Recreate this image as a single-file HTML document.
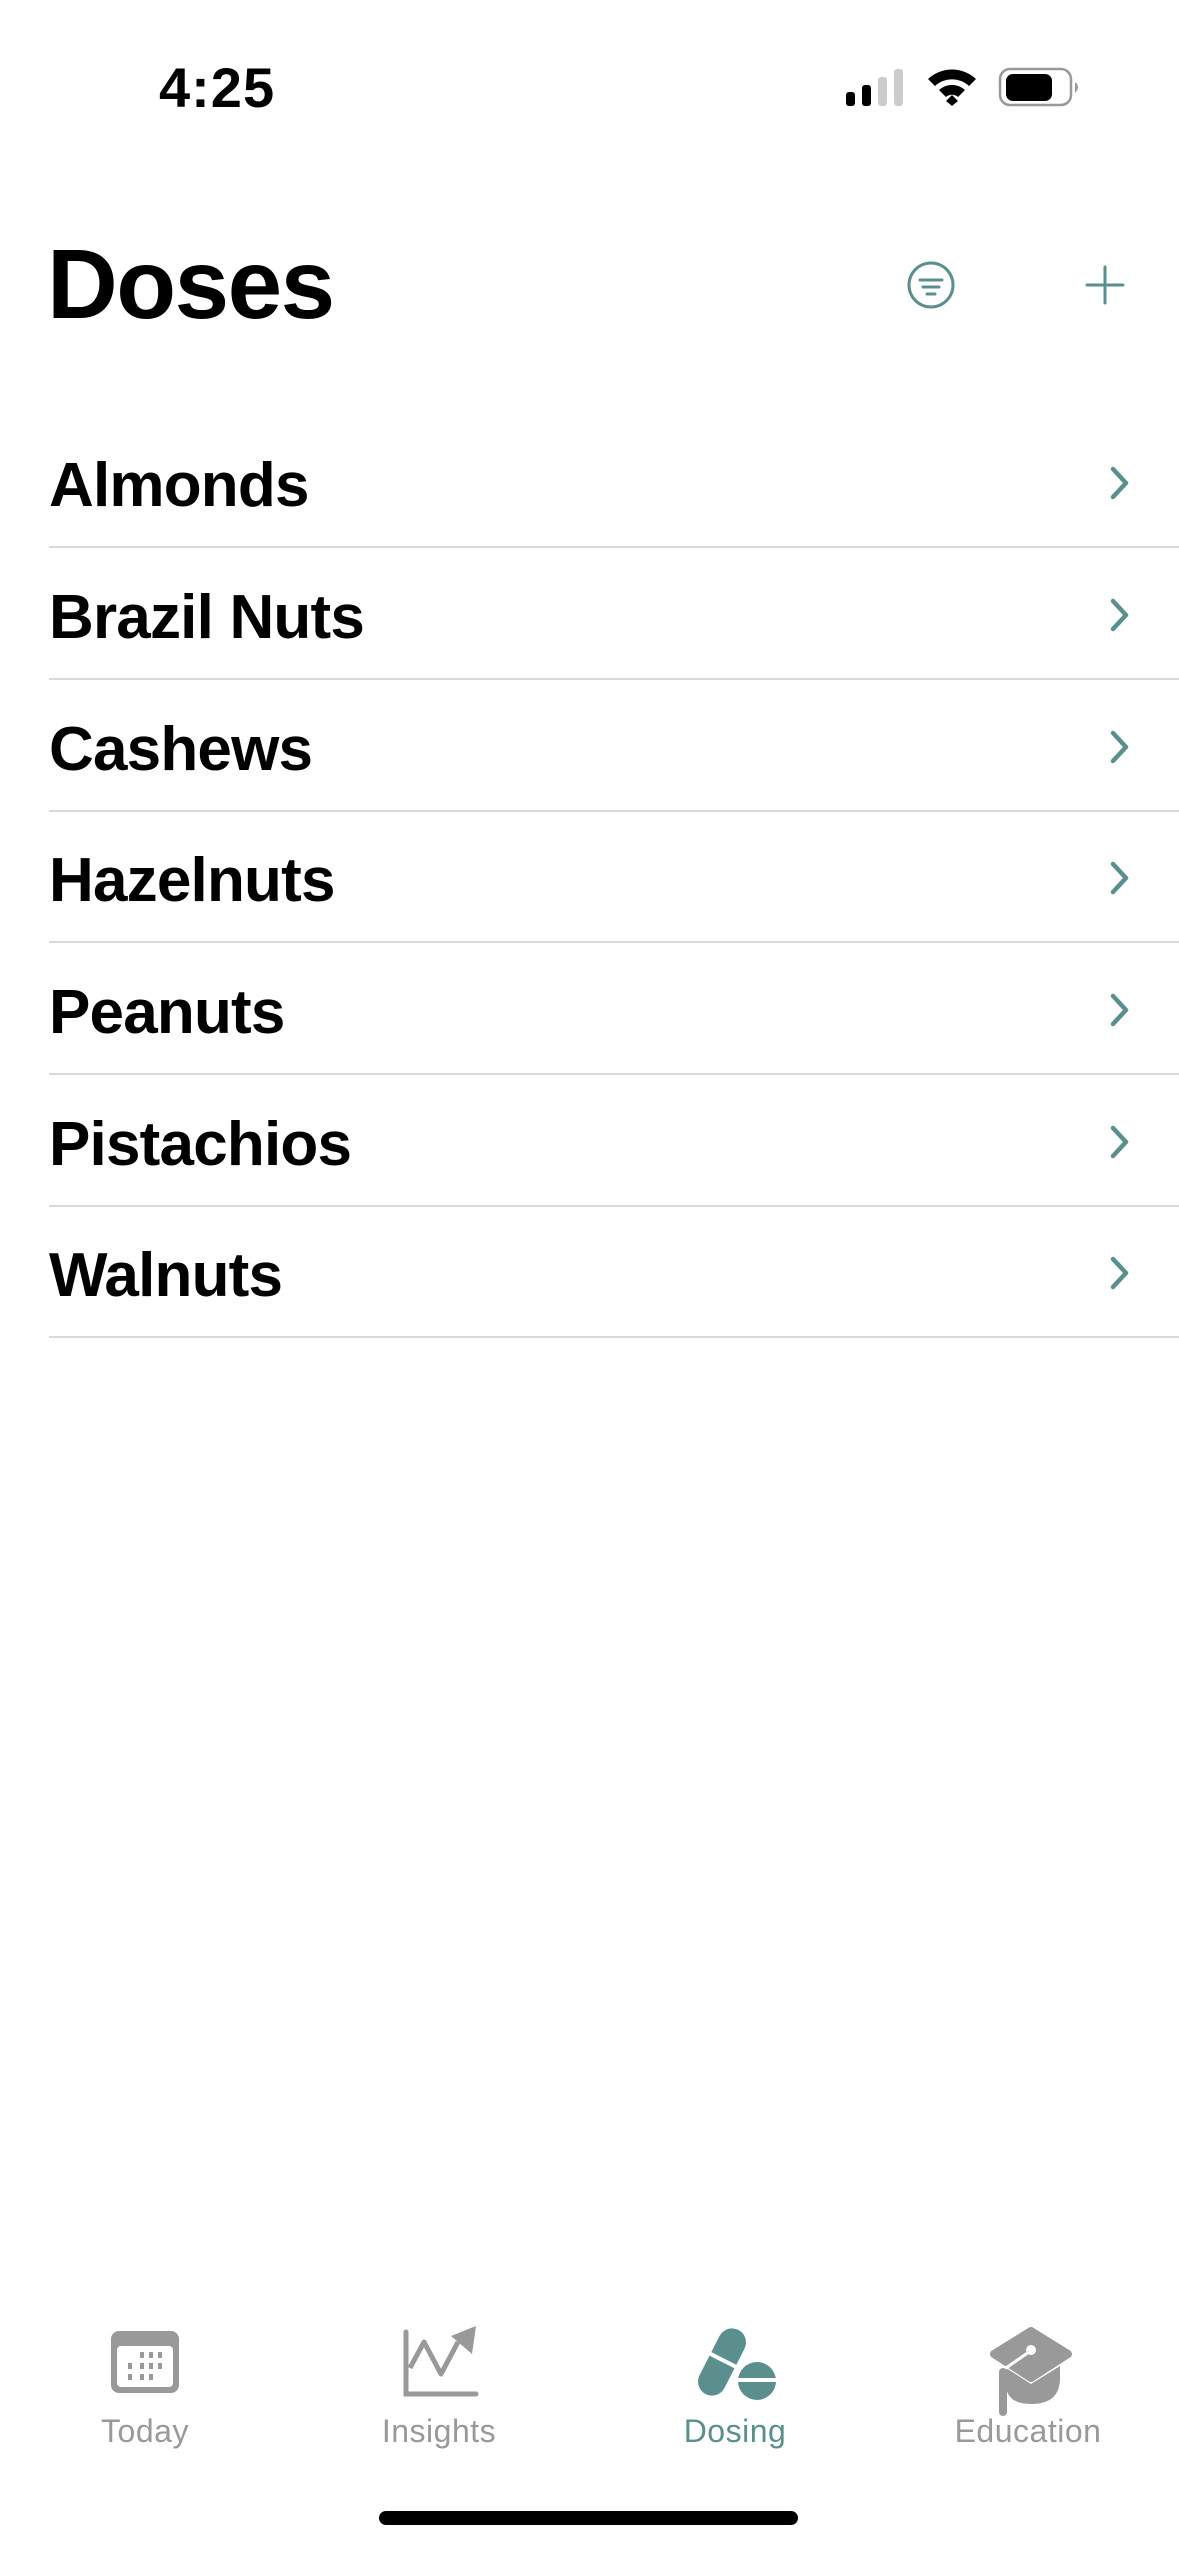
<!DOCTYPE html>
<html><head><meta charset="utf-8"><style>
html,body{margin:0;padding:0;background:#fff;}
body{width:1179px;height:2556px;position:relative;overflow:hidden;font-family:"Liberation Sans",sans-serif;}
.abs{position:absolute;}
.row{position:absolute;left:49px;right:0;height:131px;border-bottom:2px solid #d9d9d9;}
.row span{position:absolute;left:0;top:35px;font-size:62px;font-weight:bold;color:#000;letter-spacing:-0.8px;}
.row svg{position:absolute;left:1059px;top:50px;}
.tab{position:absolute;top:2413px;width:300px;text-align:center;font-size:32px;color:#999;letter-spacing:0.5px;}
</style></head><body>
<div class="abs" style="left:159px;top:55px;font-size:56px;font-weight:bold;letter-spacing:1px;">4:25</div>
<svg class="abs" style="left:840px;top:60px" width="250" height="55" viewBox="840 60 250 55">
<rect x="846" y="92" width="9" height="14" rx="3" fill="#000"/>
<rect x="862" y="85" width="9" height="21" rx="3" fill="#000"/>
<rect x="878" y="77" width="9" height="29" rx="3" fill="#ccc"/>
<rect x="894" y="69" width="9" height="37" rx="3" fill="#ccc"/>
<path d="M928 79 A35 35 0 0 1 976 79 L969 86 A25 25 0 0 0 935 86Z" fill="#000"/>
<path d="M939 90 A19 19 0 0 1 965 90 L958 97 A9 9 0 0 0 946 97Z" fill="#000"/>
<path d="M946 101 L952 95 L958 101 L952 106Z" fill="#000"/>
<rect x="1000" y="69" width="71" height="36" rx="10" fill="none" stroke="#999" stroke-width="2.5"/>
<rect x="1006" y="74" width="46" height="27" rx="7" fill="#000"/>
<path d="M1075 82 Q1081 87 1075 93Z" fill="#999"/>
</svg>
<div class="abs" style="left:47px;top:228px;font-size:98px;font-weight:bold;letter-spacing:-1.5px;">Doses</div>
<svg class="abs" style="left:906px;top:260px" width="50" height="50" viewBox="0 0 50 50">
<circle cx="25" cy="25" r="22" fill="none" stroke="#5a8f8e" stroke-width="3"/>
<path d="M14 20H36M17 27H33M21 34H29" stroke="#5a8f8e" stroke-width="3" stroke-linecap="round"/>
</svg>
<svg class="abs" style="left:1085px;top:265px" width="40" height="40" viewBox="0 0 40 40">
<path d="M20 2V38M2 20H38" stroke="#5a8f8e" stroke-width="3" stroke-linecap="round"/>
</svg>
<div class="row" style="top:415px"><span>Almonds</span><svg width="24" height="36" viewBox="0 0 24 36"><path d="M5 4L18 18L5 32" fill="none" stroke="#5a8f8e" stroke-width="4.5" stroke-linecap="round" stroke-linejoin="round"/></svg></div>
<div class="row" style="top:547px"><span>Brazil Nuts</span><svg width="24" height="36" viewBox="0 0 24 36"><path d="M5 4L18 18L5 32" fill="none" stroke="#5a8f8e" stroke-width="4.5" stroke-linecap="round" stroke-linejoin="round"/></svg></div>
<div class="row" style="top:679px"><span>Cashews</span><svg width="24" height="36" viewBox="0 0 24 36"><path d="M5 4L18 18L5 32" fill="none" stroke="#5a8f8e" stroke-width="4.5" stroke-linecap="round" stroke-linejoin="round"/></svg></div>
<div class="row" style="top:810px"><span>Hazelnuts</span><svg width="24" height="36" viewBox="0 0 24 36"><path d="M5 4L18 18L5 32" fill="none" stroke="#5a8f8e" stroke-width="4.5" stroke-linecap="round" stroke-linejoin="round"/></svg></div>
<div class="row" style="top:942px"><span>Peanuts</span><svg width="24" height="36" viewBox="0 0 24 36"><path d="M5 4L18 18L5 32" fill="none" stroke="#5a8f8e" stroke-width="4.5" stroke-linecap="round" stroke-linejoin="round"/></svg></div>
<div class="row" style="top:1074px"><span>Pistachios</span><svg width="24" height="36" viewBox="0 0 24 36"><path d="M5 4L18 18L5 32" fill="none" stroke="#5a8f8e" stroke-width="4.5" stroke-linecap="round" stroke-linejoin="round"/></svg></div>
<div class="row" style="top:1205px"><span>Walnuts</span><svg width="24" height="36" viewBox="0 0 24 36"><path d="M5 4L18 18L5 32" fill="none" stroke="#5a8f8e" stroke-width="4.5" stroke-linecap="round" stroke-linejoin="round"/></svg></div>

<svg class="abs" style="left:0;top:2306px" width="1179" height="130" viewBox="0 2300 1179 130">
<rect x="111" y="2325" width="68" height="62" rx="8" fill="#999"/>
<rect x="117" y="2340" width="56" height="41" rx="4" fill="#fff"/>
<g fill="#999">
<rect x="140" y="2346" width="4" height="6"/><rect x="149" y="2346" width="4" height="6"/><rect x="158" y="2346" width="4" height="6"/>
<rect x="128" y="2357" width="4" height="6"/><rect x="140" y="2357" width="4" height="6"/><rect x="149" y="2357" width="4" height="6"/><rect x="158" y="2357" width="4" height="6"/>
<rect x="128" y="2368" width="4" height="6"/><rect x="140" y="2368" width="4" height="6"/><rect x="149" y="2368" width="4" height="6"/>
</g>
<path d="M406 2326V2388H476" fill="none" stroke="#999" stroke-width="5" stroke-linecap="round"/>
<path d="M410 2362L424 2336L441 2368L458 2336" fill="none" stroke="#999" stroke-width="5" stroke-linejoin="round"/>
<path d="M451 2330L476 2320L472 2348Z" fill="#999"/>
<g transform="rotate(27 722 2356)">
<rect x="708" y="2320" width="28" height="72" rx="14" fill="#5a8f8e"/>
<rect x="704" y="2352" width="36" height="4" fill="#fff"/>
</g>
<circle cx="757" cy="2375" r="19" fill="#5a8f8e"/>
<rect x="736" y="2372" width="42" height="4" fill="#fff"/>
<path d="M1031 2325L1068 2348L1031 2372L994 2348Z" fill="#999" stroke="#999" stroke-width="8" stroke-linejoin="round"/>
<path d="M1006 2362V2378Q1006 2398 1031 2398Q1060 2398 1060 2372V2360L1031 2378Z" fill="#999"/>
<circle cx="1031" cy="2344" r="5" fill="#fff"/>
<path d="M1029 2346L1003 2364V2384" fill="none" stroke="#fff" stroke-width="3"/>
<rect x="999" y="2362" width="8" height="48" rx="4" fill="#999"/>
</svg>
<div class="tab" style="left:-5px">Today</div>
<div class="tab" style="left:289px">Insights</div>
<div class="tab" style="left:585px;color:#5a8f8e">Dosing</div>
<div class="tab" style="left:878px">Education</div>
<div class="abs" style="left:379px;top:2511px;width:419px;height:14px;border-radius:7px;background:#000"></div>
</body></html>
